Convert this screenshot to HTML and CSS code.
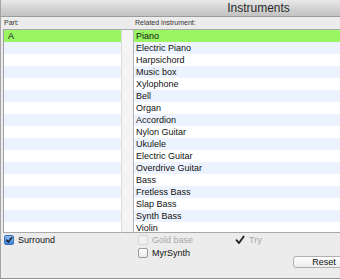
FILE: index.html
```html
<!DOCTYPE html>
<html lang="en">
<head>
  <meta charset="UTF-8" />
  <title>Instruments</title>
  <link rel="stylesheet" href="styles.css">
</head>
<body>
  <div class="window">
    <div class="titlebar">Instruments</div>

    <div class="lists">
      <div class="col part">
        <div class="label">Part:</div>
        <div class="list">
          <div class="row sel">A</div>
          <div class="row"></div><div class="row"></div><div class="row"></div>
          <div class="row"></div><div class="row"></div><div class="row"></div>
          <div class="row"></div><div class="row"></div><div class="row"></div>
          <div class="row"></div><div class="row"></div><div class="row"></div>
          <div class="row"></div><div class="row"></div><div class="row"></div>
          <div class="row"></div>
        </div>
      </div>
      <div class="gutter"></div>
      <div class="col instr">
        <div class="label">Related instrument:</div>
        <div class="list">
          <div class="row sel">Piano</div>
          <div class="row">Electric Piano</div>
          <div class="row">Harpsichord</div>
          <div class="row">Music box</div>
          <div class="row">Xylophone</div>
          <div class="row">Bell</div>
          <div class="row">Organ</div>
          <div class="row">Accordion</div>
          <div class="row">Nylon Guitar</div>
          <div class="row">Ukulele</div>
          <div class="row">Electric Guitar</div>
          <div class="row">Overdrive Guitar</div>
          <div class="row">Bass</div>
          <div class="row">Fretless Bass</div>
          <div class="row">Slap Bass</div>
          <div class="row">Synth Bass</div>
          <div class="row">Violin</div>
        </div>
      </div>
    </div>

    <div class="options">
      <label class="opt">
        <span class="box checked">
          <svg viewBox="0 0 10 10"><path d="M2 5.2 L4.2 7.6 L8.4 2" /></svg>
        </span>
        Surround
      </label>
      <label class="opt disabled">
        <span class="box off"></span>
        Gold base
      </label>
      <label class="opt disabled">
        <span class="tick">
          <svg viewBox="0 0 10 10"><path d="M1.5 5.2 L4 8 L8.6 1.6" /></svg>
        </span>
        Try
      </label>

      <label class="opt second">
        <span class="box"></span>
        MyrSynth
      </label>
      <button class="btn">Reset</button>
    </div>
  </div>
</body>
</html>
```

FILE: styles.css
```css
body {
  margin: 0;
  background: #fff;
  font-family: 'Liberation Sans', Arial, sans-serif;
  overflow: hidden;
}

.window {
  height: 278px;
  background: #ececec;
  border-left: 1px solid #a4a4a4;
  border-bottom: 1px solid #8e8e8e;
}

/* the window is wider than the shot, so the title sits right of centre */
.titlebar {
  height: 16px;
  line-height: 17px;
  padding-left: 176px;
  text-align: center;
  font-size: 12px;
  color: #2a2a2a;
  background: linear-gradient(#e9e9e9, #cfcfcf 60%, #c3c3c3);
  border-bottom: 1px solid #9c9c9c;
}

.lists {
  display: flex;
  padding-left: 2px;
}

.label {
  height: 12px;
  line-height: 11px;
  font-size: 7px;
  color: #333;
  padding-left: 1px;
}

.list {
  height: 202px;
  overflow: hidden;
  background: #fff;
  border-top: 1px solid #a9a9a9;
  border-bottom: 1px solid #a9a9a9;
}

.part .list {
  border-left: 1px solid #a0a0a0;
}

.part {
  width: 118px;
}

.gutter {
  width: 11px;
  margin-top: 12px;
  height: 202px;
  background: #f4f4f4;
  border-top: 1px solid #a9a9a9;
  border-bottom: 1px solid #a9a9a9;
  border-left: 1px solid #dcdcdc;
  border-right: 1px solid #b4b4b4;
}

.instr {
  flex: 1;
}

.row {
  height: 12px;
  line-height: 12px;
  font-size: 9px;
  color: #111;
  padding-left: 2px;
  white-space: nowrap;
}

.row:nth-child(even) {
  background: #edf3fe;
}

.row.sel {
  background: #9af562;
}

.part .row {
  padding-left: 4px;
}

.options {
  display: grid;
  grid-template-columns: 134px 97px 58px 1fr;
  grid-template-rows: 13px 13px 7px;
  padding: 2px 0 0 3px;
}

.opt {
  display: flex;
  align-items: center;
  gap: 4px;
  height: 10px;
  font-size: 9px;
  color: #111;
}

.opt.second {
  grid-row: 2;
  grid-column: 2;
}

.opt.disabled {
  color: #a8a8a8;
}

.box {
  width: 8px;
  height: 8px;
  border: 1px solid #9a9a9a;
  border-radius: 2px;
  background: linear-gradient(#fff, #e9e9e9);
  display: flex;
}

.box.off {
  border-color: #d6d6d6;
  background: #f0f0f0;
}

.box.checked {
  border-color: #3d6fb3;
  background: linear-gradient(#8fbbee, #3a86dc);
}

.box svg, .tick svg {
  width: 100%;
  height: 100%;
  fill: none;
  stroke: #1c2230;
  stroke-width: 1.9;
  stroke-linecap: round;
  stroke-linejoin: round;
}

.tick {
  width: 10px;
  height: 10px;
  display: flex;
}

.tick svg {
  stroke: #2a2a2a;
}

.btn {
  grid-row: 2 / 4;
  grid-column: 4;
  align-self: end;
  height: 12px;
  width: 62px;
  padding: 0;
  font-family: inherit;
  font-size: 9px;
  line-height: 10px;
  color: #111;
  background: linear-gradient(#fefefe, #ececec);
  border: 1px solid #b0b0b0;
  border-radius: 3px;
}
```
